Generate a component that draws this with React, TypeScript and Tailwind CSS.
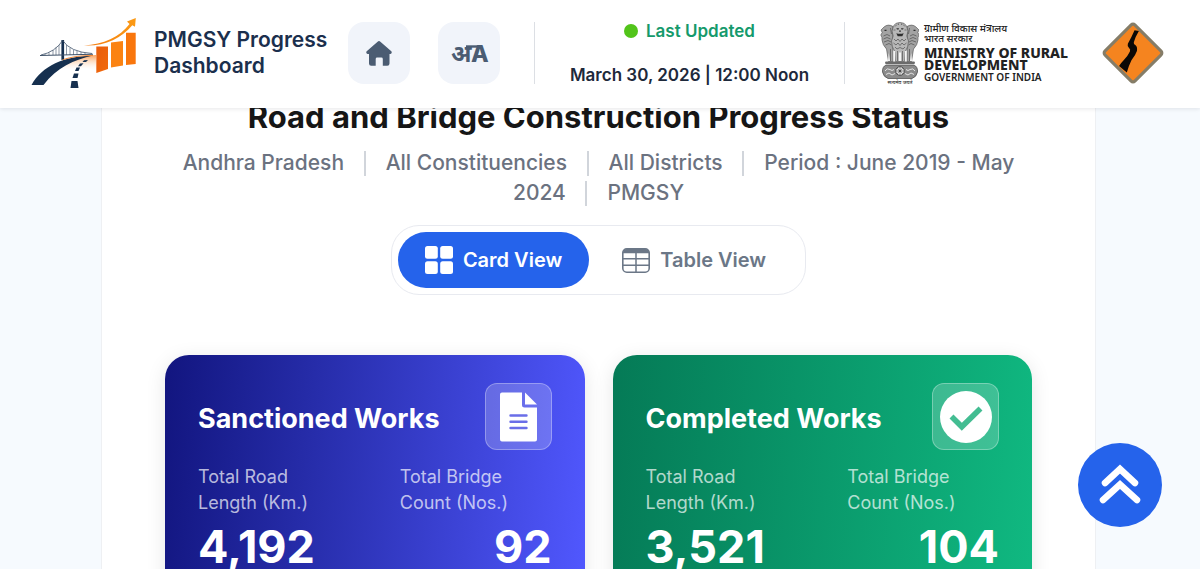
import type { ReactNode } from "react";
import { clsx } from "clsx";

interface Metric {
  label: string;
  value: string;
}

interface WorkCardProps {
  title: string;
  icon: ReactNode;
  metrics: Metric[];
  className: string;
}

const FILTERS = ["Andhra Pradesh", "All Constituencies", "All Districts", "Period : June 2019 - May 2024", "PMGSY"];

function DashboardLogo() {
  return (
    <svg viewBox="31 16 106 74" className="h-[74px] w-[106px] shrink-0" aria-hidden>
      <defs>
        <linearGradient id="glow" x1="0" y1="0" x2="0" y2="1">
          <stop offset="0" stopColor="#f9a35c" />
          <stop offset="1" stopColor="#ffffff" stopOpacity="0" />
        </linearGradient>
        <linearGradient id="bar" x1="0" y1="0" x2="1" y2="1">
          <stop offset="0" stopColor="#e85d0c" />
          <stop offset="1" stopColor="#f26a0c" />
        </linearGradient>
        <linearGradient id="swoosh" x1="0" y1="0" x2="1" y2="0">
          <stop offset="0" stopColor="#f47a12" />
          <stop offset="1" stopColor="#fb9a14" />
        </linearGradient>
      </defs>
      <path d="M58 69C68 60 80 56 96 55V71C86 66 72 68 58 71Z" fill="url(#glow)" />
      <path d="M31.5 85C42 66 64 56 93 55.5C74 60 57 67 43.5 85Z" fill="#16304f" />
      <path d="M62 60C72 56.5 82 55.5 93 55.5" fill="none" stroke="#f08a3c" />
      <g fill="#16304f">
        <path d="M71.5 81H77.5L78.5 88H70.5Z" />
        <path d="M74 73.5H78.5L77.5 78H72.5Z" />
        <path d="M76.5 67.5H80L78.5 71H75Z" />
        <path d="M80 63.5L83.5 63.2L81 66.3H78Z" />
        <path d="M84 60.3L88 60L86 62H82.5Z" />
        <path d="M61.4 40H64.1V59L61.4 60Z" />
      </g>
      <g fill="none" stroke="#3f5269" strokeWidth="0.8">
        <path d="M40 55.5L93 54.3" strokeWidth="1.1" />
        <path d="M41 55Q55 52 62.7 40.5Q70 52 92 53.5" />
        <path d="M45 54V55M49 52.5V55M53 50V55M56 47.5V55M59 45V55M66.5 45V55M70 48V55M73.5 50V55M77 51V55M81 52V55M85 53V55" strokeWidth="0.6" />
      </g>
      <path d="M96.3 46.5H108V69L96.3 73Z" fill="url(#bar)" />
      <path d="M111 42.5L123 41V65.5L111 67.5Z" fill="#fb8312" />
      <path d="M126 32.7H135.7V64L126 65Z" fill="#f9760c" />
      <path
        d="M84 45.5C103 44.5 120 37 129.5 24L127 21.5L135.8 18L135 26.8L132.3 25.3C121 39 104 46.5 84 45.5Z"
        fill="url(#swoosh)"
      />
    </svg>
  );
}

function HomeIcon() {
  return (
    <svg viewBox="0 0 26 25" className="h-[25px] w-[26px]" fill="#4b5c72" aria-hidden>
      <path d="M11.6 0.7Q13 -0.5 14.4 0.7L25.3 10.2Q26 11 25.6 12.1Q25.2 13 24.2 13H23.5V22.6Q23.5 24.8 21.3 24.8H16.8V18Q16.8 16.6 15.4 16.6H11.1Q9.7 16.6 9.7 18V24.8H5.2Q3 24.8 3 22.6V13H1.8Q0.8 13 0.4 12.1Q0 11 0.7 10.2Z" />
    </svg>
  );
}

function LanguageIcon() {
  return (
    <svg viewBox="0 0 44 44" className="size-11" fill="#4b5c72" aria-hidden>
      <text x="4" y="31" fontSize="24" fontWeight="700" className="font-['Noto_Sans','Noto_Sans_Devanagari',sans-serif]">
        अ
      </text>
      <text x="24" y="31" fontSize="23" fontWeight="800" className="font-['Inter',sans-serif]">
        A
      </text>
      <rect x="19" y="14.300" width="15" height="2.400" />
    </svg>
  );
}

function NationalEmblem() {
  return (
    <svg viewBox="880 20 39 64" className="h-16 w-[39px] shrink-0" aria-hidden>
      {/* the three visible lions */}
      <g fill="#a3a3a3" stroke="#4a4a4a" strokeWidth="0.6">
        <path d="M893 25.500Q888 22.500 884 26L881 29L882.200 31.500L880.800 34Q882.500 36 882 39Q882.500 44 886.500 48L888.500 60.500H893V32Z" />
        <path d="M907 25.500Q912 22.500 916 26L919 29L917.800 31.500L919.200 34Q917.500 36 918 39Q917.500 44 913.500 48L911.500 60.500H907V32Z" />
        <path d="M893.500 25Q895 21.500 900 21.500Q905 21.500 906.500 25L908 30L906.800 35L908.500 40Q908.500 46 905 51L904.500 60.500H895.500L895 51Q891.500 46 891.500 40L893.200 35L892 30Z" fill="#b8b8b8" />
      </g>
      <g fill="none" stroke="#505050" strokeWidth="0.7">
        <path d="M895 25.500L897 23.500M898.500 24V22.500M901.500 24V22.500M905 25.500L903 23.500M893.500 29H895.500M906.500 29H904.500" />
        <path d="M894 38L896 40L898 38L900 40.500L902 38L904 40L906 38M893.500 42L896 44L898 42L900 44.500L902 42L904 44L906.500 42M895 46L897 48L900 46.500L903 48L905 46" />
        <path d="M883.500 35L887 33.500L890 35M883.500 38L887 36.500L890.500 38M884 41L888 39.500L891 41M885.500 44L889 42.500L891.500 44M916.500 35L913 33.500L910 35M916.500 38L913 36.500L909.500 38M916 41L912 39.500L909 41M914.500 44L911 42.500L908.500 44" />
        <path d="M890.500 27L891.500 33M909.500 27L908.500 33M897.500 50V60M902.500 50V60M890.500 48V60M909.500 48V60" />
      </g>
      <g fill="#2f2f2f">
        <path d="M896.300 27.300H899L898.600 28.600H897ZM901 27.300H903.700L903 28.600H901.400Z" />
        <path d="M899 29.500H901L900.500 31H899.500Z" />
        <path d="M896.300 32.200Q900 33.300 903.700 32.200L902.300 35.300H897.700Z" />
        <path d="M884.500 28.800H886.500V30H884.500ZM913.500 28.800H915.500V30H913.500Z" />
      </g>
      <path d="M893.500 50H895.300L895 60H893.600ZM904.700 50H906.500L906.400 60H905ZM899 51.500H901V60H899ZM888.800 52L890 60H888ZM911.200 52L910 60H912Z" fill="#f6f6f6" />
      {/* abacus with the wheel */}
      <rect x="885" y="60.500" width="30" height="2.600" rx="1.300" fill="#6b6b6b" />
      <path d="M886 64H914Q918 66 917.500 71Q916.500 76 912 77.500H888Q883.500 76 882.500 71Q882 66 886 64Z" fill="#8b8b8b" stroke="#444" strokeWidth="0.7" />
      <path d="M885 70Q887 66.500 890 68.500Q892 70.500 894 68.500M915 70Q913 66.500 910 68.500Q908 70.500 906 68.500M886 73.500L889 72L892 74L895 72.500M914 73.500L911 72L908 74L905 72.500" fill="none" stroke="#ececec" strokeWidth="0.9" />
      <circle cx="900" cy="70" r="4.3" fill="#ddd" stroke="#444" strokeWidth="0.9" />
      <circle cx="900" cy="70" r="1.3" fill="#333" />
      <path d="M900 66V74M896 70H904M897.2 67.2L902.8 72.8M902.8 67.2L897.2 72.8" stroke="#555" strokeWidth="0.5" />
      <text x="900" y="82.500" textAnchor="middle" fontSize="5" fontWeight="500" fill="#333" className="font-['Noto_Sans','Noto_Sans_Devanagari',sans-serif]">
        सत्यमेव जयते
      </text>
    </svg>
  );
}

function RoadSign() {
  return (
    <svg viewBox="1102 21 62 62" className="size-16 shrink-0" aria-hidden>
      <rect x="1112.5" y="31.5" width="41" height="41" rx="2.5" transform="rotate(45 1133 52)" fill="#f5841f" stroke="#857d68" strokeWidth="3" />
      <path
        d="M1134.5 30L1138.7 30.8Q1135 37 1133.8 41.5Q1133.3 43.5 1135.5 44.500Q1137.5 46 1136.8 50Q1135.5 54 1131.5 59Q1128.5 65 1127 71L1119.5 64.5Q1121 62 1123.5 59.5Q1128 55 1130 50.5Q1131 48.5 1129 47Q1127.3 45.5 1128 43Q1131.5 37 1134.5 30Z"
        fill="#0b0806"
      />
    </svg>
  );
}

function GridIcon() {
  return (
    <svg viewBox="0 0 28 28" className="size-7" fill="currentColor" aria-hidden>
      <rect width="12.8" height="12.8" rx="2.5" />
      <rect x="15.2" width="12.8" height="12.8" rx="2.5" />
      <rect y="15.2" width="12.8" height="12.8" rx="2.5" />
      <rect x="15.2" y="15.2" width="12.8" height="12.8" rx="2.5" />
    </svg>
  );
}

function TableIcon() {
  return (
    <svg viewBox="0 0 28 25" className="h-[25px] w-7" fill="none" stroke="currentColor" aria-hidden>
      <rect x="0.8" y="0.8" width="26.4" height="23.4" rx="4" strokeWidth="1.6" />
      <path d="M1 4.5Q1 1 4.5 1H23.5Q27 1 27 4.5Z" fill="currentColor" stroke="none" />
      <path d="M1 4.6H27M1 10.8H27M1 17.2H27M14 4.6V24" strokeWidth="1.5" />
    </svg>
  );
}

function DocumentIcon() {
  return (
    <svg viewBox="0 0 37 50" className="h-[50px] w-[37px]" aria-hidden>
      <path d="M2 0.5H22V13Q22 15.5 24.5 15.5H37V47.5Q37 49.5 35 49.5H2Q0 49.5 0 47.5V2.5Q0 0.5 2 0.5Z" fill="#fff" />
      <path d="M25 0.5L37 12.5H25Z" fill="#fff" />
      <path d="M10.5 23.5H26.5M10.5 29.7H26.5M10.5 36H26.5" stroke="#6a6ee8" strokeWidth="2.4" strokeLinecap="round" />
    </svg>
  );
}

function CheckIcon() {
  return (
    <svg viewBox="0 0 52 52" className="size-[52px]" aria-hidden>
      <circle cx="26" cy="26" r="26" fill="#fff" />
      <path d="M11.5 25.5L21.8 35.8L40.5 17.5" fill="none" stroke="#43bd92" strokeWidth="5.6" />
    </svg>
  );
}

function WorkCard({ title, icon, metrics, className }: WorkCardProps) {
  return (
    <article className={clsx("rounded-3xl px-[33px] pt-7 pb-8 text-white shadow-[0_4px_20px_rgba(0,0,0,0.10)]", className)}>
      <div className="flex items-center justify-between">
        <h2 className="pt-1 text-[27px] leading-9 font-bold">{title}</h2>
        <span className="flex size-[67px] items-center justify-center rounded-xl border border-white/30 bg-white/20">{icon}</span>
      </div>
      <dl className="mt-3.5 grid grid-cols-2 gap-[50px]">
        {metrics.map((metric, index) => (
          <div key={metric.label}>
            <dt className="text-lg leading-[26px] text-white/70">{metric.label}</dt>
            <dd className={clsx("mt-1 text-[45px] leading-[54px] font-bold", index > 0 && "text-right")}>{metric.value}</dd>
          </div>
        ))}
      </dl>
    </article>
  );
}

function Header() {
  return (
    <header className="relative z-10 flex h-[108px] shrink-0 items-center bg-white pr-[35px] pb-0.5 pl-[31px] shadow-[0_1px_4px_rgba(15,23,42,0.10)]">
      <a href="#" className="flex items-center gap-[17px]">
        <DashboardLogo />
        <span className="w-44 text-[21px] leading-[26px] font-semibold whitespace-nowrap text-[#1b2f4d]">
          PMGSY Progress
          <br />
          Dashboard
        </span>
      </a>
      <nav className="ml-[18px] flex gap-7">
        <button type="button" aria-label="Home" className="flex size-[62px] items-center justify-center rounded-2xl bg-[#f1f4fa]">
          <HomeIcon />
        </button>
        <button type="button" aria-label="Change language" className="flex size-[62px] items-center justify-center rounded-2xl bg-[#f1f4fa]">
          <LanguageIcon />
        </button>
      </nav>
      <div className="ml-[34px] flex h-[62px] flex-1 flex-col items-center justify-between border-x border-[#dcdfe4] text-[17px] leading-[18px]">
        <p className="flex items-center gap-2 font-semibold text-[#159a6c]">
          <span className="size-3.5 rounded-full bg-[#52c41a]" />
          Last Updated
        </p>
        <p className="font-semibold whitespace-nowrap text-[#1e293b]">March 30, 2026 | 12:00 Noon</p>
      </div>
      <div className="ml-[35px] flex items-center gap-[5px]">
        <NationalEmblem />
        <div className="w-[150px] font-['Noto_Sans','Noto_Sans_Devanagari',sans-serif] whitespace-nowrap text-[#222]">
          <p className="text-[10px] leading-[10px] font-medium">ग्रामीण विकास मंत्रालय</p>
          <p className="text-[10px] leading-[10px] font-medium">भारत सरकार</p>
          <p className="mt-1 text-[14px] leading-3 font-extrabold">MINISTRY OF RURAL</p>
          <p className="text-[14px] leading-3 font-extrabold">DEVELOPMENT</p>
          <p className="text-[10px] leading-3 font-semibold">GOVERNMENT OF INDIA</p>
        </div>
      </div>
      <a href="#" aria-label="Rural roads" className="ml-[27px]">
        <RoadSign />
      </a>
    </header>
  );
}

export default function App() {
  return (
    <div className="flex h-screen flex-col overflow-hidden bg-[#f6fafe] font-['Inter','Liberation_Sans',sans-serif]">
      <Header />
      <main className="mr-[104px] ml-[101px] -mt-[11px] border-x border-[#eef0f3] bg-white px-[63px]">
        <h1 className="text-center text-[31px] leading-10 font-bold text-[#161616]">Road and Bridge Construction Progress Status</h1>
        <p className="mt-[11px] text-center text-[21px] leading-[30px] font-medium text-[#6b7280]">
          {FILTERS.map((filter, index) => (
            <span key={filter}>
              {index > 0 && <span className="mr-5 ml-3.5 inline-block h-[25px] w-0.5 bg-[#d1d5db] align-[-6px]" />}
              {filter}{" "}
            </span>
          ))}
        </p>
        <div className="mt-[17px] flex justify-center">
          <div className="flex rounded-[28px] border border-[#e8eaf0] p-1.5 text-xl font-semibold">
            <button type="button" aria-pressed="true" className="flex h-14 items-center gap-2.5 rounded-[28px] bg-[#2563eb] px-[27px] text-white">
              <GridIcon />
              Card View
            </button>
            <button type="button" aria-pressed="false" className="flex h-14 items-center gap-2.5 px-[33px] text-[#6b7787]">
              <TableIcon />
              Table View
            </button>
          </div>
        </div>
        <section className="mt-[60px] grid grid-cols-2 gap-7">
          <WorkCard
            title="Sanctioned Works"
            icon={<DocumentIcon />}
            className="bg-linear-95 from-[#12157f] to-[#5158ff]"
            metrics={[
              { label: "Total Road Length (Km.)", value: "4,192" },
              { label: "Total Bridge Count (Nos.)", value: "92" },
            ]}
          />
          <WorkCard
            title="Completed Works"
            icon={<CheckIcon />}
            className="bg-linear-95 from-[#057a56] to-[#10b981]"
            metrics={[
              { label: "Total Road Length (Km.)", value: "3,521" },
              { label: "Total Bridge Count (Nos.)", value: "104" },
            ]}
          />
        </section>
      </main>
      <button
        type="button"
        aria-label="Back to top"
        className="fixed right-[38px] bottom-[42px] z-20 flex size-[84px] items-center justify-center rounded-full bg-[#2563eb]"
      >
        <svg viewBox="0 0 84 84" className="size-[84px]" fill="none" stroke="#fff" strokeWidth="6.5" strokeLinecap="round" strokeLinejoin="miter" aria-hidden>
          <path d="M27 40L42 26L57 40M25 57L42 41.5L59 57" />
        </svg>
      </button>
    </div>
  );
}
